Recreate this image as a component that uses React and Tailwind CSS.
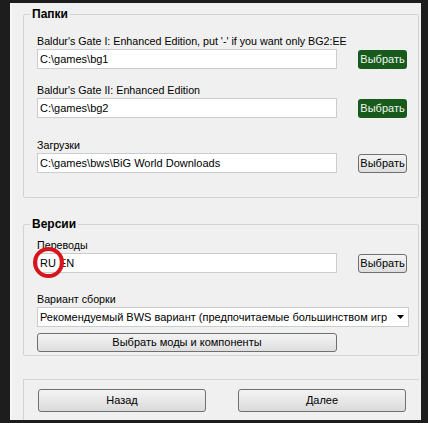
import React from "react";

const font = { fontFamily: '"Liberation Sans", Arial, sans-serif' };

function GreenBtn() {
  return (
    <button className="h-[19px] w-[49px] shrink-0 rounded-[3px] bg-[#185a1c] text-[11px] leading-[19px] text-[#eef7ee]">
      Выбрать
    </button>
  );
}

function GreyBtn() {
  return (
    <button className="h-[19px] w-[49px] shrink-0 rounded-[3px] border border-[#6f6f6f] bg-gradient-to-b from-[#f4f4f4] to-[#dedede] text-[11px] leading-[17px] text-black">
      Выбрать
    </button>
  );
}

function Input({ value, children }) {
  return (
    <div className="relative h-[20px] w-[300px] shrink-0 border border-[#c9ccd1] bg-white pl-[2px] text-[11px] leading-[18px] text-black">
      {value}
      {children}
    </div>
  );
}

function Row({ label, value, green, mt, children }) {
  return (
    <div className={mt}>
      <div className="text-[10.7px] leading-[13px] text-black">{label}</div>
      <div className="mt-[1px] flex items-center gap-[21px]">
        <Input value={value}>{children}</Input>
        {green ? <GreenBtn /> : <GreyBtn />}
      </div>
    </div>
  );
}

export default function App() {
  return (
    <div
      style={font}
      className="h-[423px] w-[428px] overflow-hidden bg-[#1d1d1d] pb-[3px] pl-[10px] pr-[7px] pt-[3px]"
    >
      <div className="flex h-full flex-col border-l-2 border-l-[#f7f7f7] bg-[#f0f0f0] pl-[11px] pr-[2px]">
        <fieldset className="mt-[4px] rounded-[2px] border border-[#d3d3d3] pb-[24px] pl-[13px] pr-[10px]">
          <legend className="ml-[-7px] px-[2px] text-[12px] font-bold leading-[14px] text-black">
            Папки
          </legend>
          <Row
            mt="mt-[14px]"
            label="Baldur's Gate I: Enhanced Edition, put '-' if you want only BG2:EE"
            value="C:\games\bg1"
            green
          />
          <Row
            mt="mt-[15px]"
            label="Baldur's Gate II: Enhanced Edition"
            value="C:\games\bg2"
            green
          />
          <Row
            mt="mt-[21px]"
            label="Загрузки"
            value="C:\games\bws\BiG World Downloads"
          />
        </fieldset>

        <fieldset className="mt-[19px] rounded-[2px] border border-[#d3d3d3] pb-[3px] pl-[13px] pr-[8px]">
          <legend className="ml-[-7px] px-[2px] text-[12px] font-bold leading-[14px] text-black">
            Версии
          </legend>
          <Row mt="mt-[8px]" label="Переводы" value="RU EN">
            <span className="absolute left-[-5px] top-[-7px] block h-[31px] w-[31px] rounded-full border-[4.5px] border-[#d8141c]" />
          </Row>
          <div className="mt-[20px] text-[10.7px] leading-[13px] text-black">
            Вариант сборки
          </div>
          <div className="mt-[1px] flex h-[20px] w-[372px] items-center overflow-hidden border border-[#c9ccd1] bg-white pl-[2px] text-[11px] text-black">
            <span className="flex-1 overflow-hidden whitespace-nowrap">
              Рекомендуемый BWS вариант (предпочитаемые большинством игр
            </span>
            <svg width="14" height="18" viewBox="0 0 14 18" className="shrink-0">
              <path d="M3 7 L10 7 L6.5 11 Z" fill="#000" />
            </svg>
          </div>
          <button className="mt-[6px] block h-[19px] w-[300px] rounded-[3px] border border-[#6f6f6f] bg-gradient-to-b from-[#f4f4f4] to-[#dedede] text-[11px] leading-[17px] text-black">
            Выбрать моды и компоненты
          </button>
        </fieldset>

        <div className="mt-[23px] flex flex-1 gap-[32px] border-l border-t border-[#d3d3d3] pl-[14px] pt-[9px]">
          <button className="h-[23px] w-[168px] rounded-[3px] border border-[#6f6f6f] bg-gradient-to-b from-[#f4f4f4] to-[#dadada] text-[11px] text-black">
            Назад
          </button>
          <button className="h-[23px] w-[168px] rounded-[3px] border border-[#6f6f6f] bg-gradient-to-b from-[#f4f4f4] to-[#dadada] text-[11px] text-black">
            Далее
          </button>
        </div>
      </div>
    </div>
  );
}
